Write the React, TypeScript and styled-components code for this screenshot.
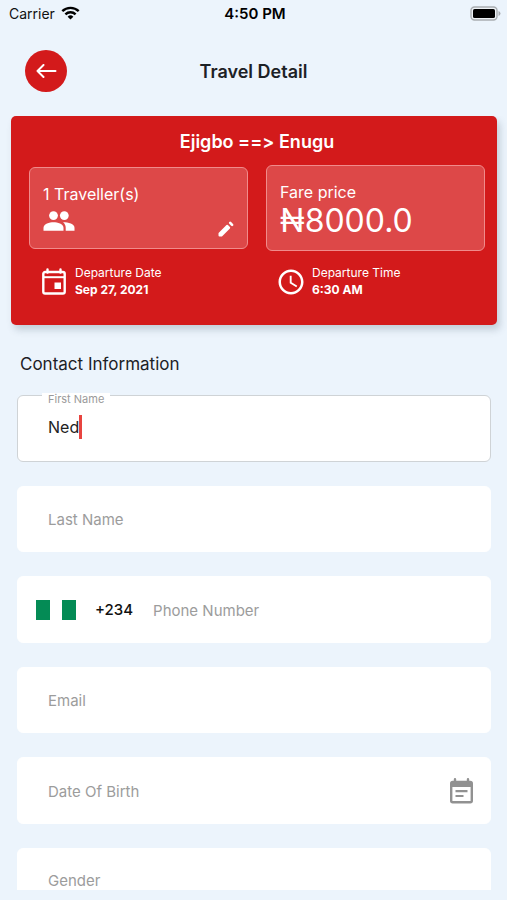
import React from 'react';
import styled, { createGlobalStyle } from 'styled-components';
import { MdAccessTime } from 'react-icons/md';

const GlobalStyle = createGlobalStyle`
  *, *::before, *::after { box-sizing: border-box; }
  body {
    margin: 0;
    background: #ecf4fc;
    color: #1c2126;
    font-family: Inter, "Liberation Sans", sans-serif;
  }
  button, input, select { font: inherit; }
`;

const Screen = styled.div`
  display: flex;
  flex-direction: column;
  height: 100vh;
  padding-bottom: 10px;
`;

const StatusBar = styled.div`
  display: grid;
  grid-template-columns: 1fr auto 1fr;
  align-items: center;
  height: 26px;
  padding: 0 6px 0 9px;
  font-size: 14px;
  color: #111;
`;

const Carrier = styled.div`
  display: flex;
  align-items: center;
  gap: 6px;
`;

const Clock = styled.time`
  font-size: 15px;
  font-weight: 600;
  color: #000;
`;

const Battery = styled.svg`
  justify-self: end;
`;

const Header = styled.header`
  display: grid;
  grid-template-columns: 1fr auto 1fr;
  align-items: center;
  height: 90px;
  padding: 0 25px;
`;

const BackButton = styled.button`
  display: grid;
  place-items: center;
  width: 42px;
  height: 42px;
  padding: 0;
  border: 0;
  border-radius: 50%;
  background: #d31a1b;
  color: #fff;
`;

const Title = styled.h1`
  margin: 0;
  font-size: 18px;
  font-weight: 600;
`;

const Content = styled.main`
  flex: 1;
  min-height: 0;
  overflow-y: auto;
  scrollbar-width: none;
`;

const TripCard = styled.section`
  margin: 0 10px 0 11px;
  padding: 14px 12px 27px 18px;
  border-radius: 5px;
  background: #d31a1b;
  color: #fff;
  box-shadow: 3px 5px 7px rgba(80, 100, 115, 0.25);
`;

const Route = styled.h2`
  margin: 0;
  font-size: 18px;
  line-height: 24px;
  font-weight: 600;
  font-variant-ligatures: none;
  font-feature-settings: "calt" 0;
  text-align: center;
`;

const Columns = styled.div<{ $top: number }>`
  display: grid;
  grid-template-columns: 1fr 1fr;
  align-items: center;
  gap: 18px;
  margin-top: ${({ $top }) => $top}px;
`;

const Panel = styled.div<{ $height: number }>`
  display: flex;
  flex-direction: column;
  justify-content: center;
  height: ${({ $height }) => $height}px;
  padding: 4px 13px 0;
  border: 1px solid #f08b8b;
  border-radius: 6px;
  background: #dd4848;
`;

const PanelLabel = styled.div`
  font-size: 16px;
  line-height: 22px;
`;

const PanelRow = styled.div`
  display: flex;
  align-items: flex-start;
  justify-content: space-between;
  padding-top: 6px;
`;

const EditButton = styled.button`
  display: flex;
  margin-top: 10px;
  padding: 0;
  border: 0;
  background: none;
  color: #fff;
`;

const Price = styled.div`
  font-size: 32px;
  line-height: 36px;
`;

const Departure = styled.div`
  display: flex;
  align-items: center;
  gap: 6px;
  padding-left: 10px;
`;

const DepartureLabel = styled.div`
  font-size: 12px;
  line-height: 16px;
`;

const DepartureValue = styled.div`
  font-size: 12px;
  line-height: 17px;
  font-weight: 700;
`;

const Form = styled.form`
  display: flex;
  flex-direction: column;
  gap: 24px;
  padding: 0 16px 0 17px;
`;

const SectionTitle = styled.h2`
  margin: 27px 20px 19px;
  font-size: 17px;
  line-height: 24px;
  font-weight: 400;
`;

const Field = styled.div<{ $height: number; $outlined?: boolean }>`
  position: relative;
  display: flex;
  flex-shrink: 0;
  align-items: center;
  height: ${({ $height }) => $height}px;
  padding: 0 17px ${({ $outlined }) => ($outlined ? 3 : 0)}px 30px;
  border: 1px solid ${({ $outlined }) => ($outlined ? '#cfd3d6' : '#fff')};
  border-radius: 6px;
  background: #fff;
`;

const PhoneField = styled(Field)`
  padding-left: 18px;
`;

const FloatingLabel = styled.label`
  position: absolute;
  top: -3px;
  left: 24px;
  padding: 0 6px;
  background: #fff;
  color: #9a9a9a;
  font-size: 11px;
  line-height: 12px;
`;

const TextInput = styled.input<{ $fit?: boolean }>`
  flex: ${({ $fit }) => ($fit ? 'none' : '1')};
  field-sizing: ${({ $fit }) => ($fit ? 'content' : 'fixed')};
  min-width: 0;
  padding: 0;
  border: 0;
  outline: 0;
  background: none;
  color: #222;
  caret-color: transparent;
  font-size: 16px;
  line-height: 24px;
  &::placeholder { color: #9c9c9c; opacity: 1; font-size: 15px; }
`;

const GenderSelect = styled.select`
  flex: 1;
  appearance: none;
  padding: 0;
  border: 0;
  background: none;
  color: #9c9c9c;
  font-size: 15px;
  line-height: 24px;
`;

const Caret = styled.span`
  width: 3px;
  height: 24px;
  background: #e8443f;
`;

const CountryButton = styled.button`
  display: flex;
  align-items: center;
  gap: 19px;
  margin-right: 20px;
  padding: 0;
  border: 0;
  background: none;
  color: #111;
  font-size: 15px;
  font-weight: 500;
`;

const Flag = styled.span`
  width: 40px;
  height: 20px;
  background: linear-gradient(90deg, #048b55 0 34%, #fff 34% 66%, #048b55 66%);
`;

const CalendarButton = styled.button`
  display: flex;
  padding: 0;
  border: 0;
  background: none;
  color: #919191;
`;

const PeopleIcon = () => (
  <svg width="32" height="20" viewBox="0 0 32 20" fill="currentColor" aria-hidden="true">
    <circle cx="10.5" cy="4.6" r="4.4" />
    <circle cx="21.3" cy="4.6" r="4.4" />
    <path d="M.5 19.8v-3c0-3.900 6-5.600 10-5.600s10 1.700 10 5.600v3z" />
    <path d="M20 11.300c5.500 0 11.500 1.500 11.500 5.500v3h-8.800v-3c0-2.300-.9-4.200-2.700-5.500z" />
  </svg>
);

const PencilIcon = () => (
  <svg width="16" height="16" viewBox="0 0 16 16" fill="currentColor" stroke="currentColor" strokeWidth="2" strokeLinejoin="round">
    <path d="M1.500 14.500v-2l7.700-7.700 2 2-7.700 7.700z" />
    <path d="M12.200 1.900 14.100 3.800" strokeWidth="2.600" strokeLinecap="round" />
  </svg>
);

const DateIcon = () => (
  <svg width="30" height="30" viewBox="-3 -1 30 30" fill="none" stroke="currentColor" aria-hidden="true">
    <rect x="1.300" y="4" width="21.400" height="21.500" rx="1.800" strokeWidth="2.400" />
    <path d="M2 9.200h20" strokeWidth="2" />
    <path d="M5.500 1.500v3M18.500 1.500v3" strokeWidth="2.400" strokeLinecap="round" />
    <path d="M12.500 14.500h6.500v6.500h-6.500z" fill="currentColor" stroke="none" />
  </svg>
);

const NoteIcon = () => (
  <svg width="23" height="26" viewBox="0 0 23 26" fill="none" stroke="currentColor">
    <rect x="1.200" y="4" width="20.600" height="20.300" rx="1.500" strokeWidth="2.400" />
    <path d="M1.500 4h20v5h-20z" fill="currentColor" stroke="none" />
    <path d="M5 1.200v3M18 1.200v3" strokeWidth="2.400" strokeLinecap="round" />
    <path d="M5.500 13.200h12M5.500 18h8" strokeWidth="2.200" />
  </svg>
);

export default function App() {
  return (
    <Screen>
      <GlobalStyle />
      <StatusBar>
        <Carrier>
          <span>Carrier</span>
          <svg width="19" height="14" viewBox="0 0 19 14" aria-hidden="true">
            <g fill="none" stroke="#000" strokeWidth="2.400">
              <path d="M1.300 5.200a11.700 11.700 0 0 1 16.400 0" />
              <path d="M4.400 8.400a7.300 7.300 0 0 1 10.200 0" />
            </g>
            <path d="M9.500 13.600 6.600 10.700a4.200 4.200 0 0 1 5.800 0z" fill="#000" />
          </svg>
        </Carrier>
        <Clock>4:50 PM</Clock>
        <Battery width="31" height="15" viewBox="0 0 31 15" aria-hidden="true">
          <rect x="1" y="1" width="26" height="13" rx="3.500" fill="#eef2f6" stroke="#a9adb1" strokeWidth="1.400" />
          <rect x="3" y="3" width="22" height="9" rx="1.600" fill="#000" />
          <path d="M28.500 5v5q2-.7 2-2.500t-2-2.500z" fill="#a9adb1" />
        </Battery>
      </StatusBar>
      <Header>
        <BackButton type="button" aria-label="Back">
          <svg width="21" height="14" viewBox="0 0 21 14" fill="none" stroke="currentColor" strokeWidth="2" strokeLinecap="round" strokeLinejoin="round">
            <path d="M19.500 7H1.500M7.500 1 1.500 7l6 6" />
          </svg>
        </BackButton>
        <Title>Travel Detail</Title>
      </Header>
      <Content>
        <TripCard>
          <Route>Ejigbo ==&gt; Enugu</Route>
          <Columns $top={11}>
            <Panel $height={82}>
              <PanelLabel>1 Traveller(s)</PanelLabel>
              <PanelRow>
                <PeopleIcon />
                <EditButton type="button" aria-label="Edit travellers">
                  <PencilIcon />
                </EditButton>
              </PanelRow>
            </Panel>
            <Panel $height={86}>
              <PanelLabel>Fare price</PanelLabel>
              <Price>₦8000.0</Price>
            </Panel>
          </Columns>
          <Columns $top={14}>
            <Departure>
              <DateIcon />
              <div>
                <DepartureLabel>Departure Date</DepartureLabel>
                <DepartureValue>Sep 27, 2021</DepartureValue>
              </div>
            </Departure>
            <Departure>
              <MdAccessTime size={30} aria-hidden="true" />
              <div>
                <DepartureLabel>Departure Time</DepartureLabel>
                <DepartureValue>6:30 AM</DepartureValue>
              </div>
            </Departure>
          </Columns>
        </TripCard>
        <SectionTitle>Contact Information</SectionTitle>
        <Form>
          <Field $height={67} $outlined>
            <FloatingLabel htmlFor="first-name">First Name</FloatingLabel>
            <TextInput id="first-name" $fit defaultValue="Ned" />
            <Caret />
          </Field>
          <Field $height={66}>
            <TextInput aria-label="Last Name" placeholder="Last Name" />
          </Field>
          <PhoneField $height={67}>
            <CountryButton type="button" aria-label="Country code +234">
              <Flag />
              <span>+234</span>
            </CountryButton>
            <TextInput type="tel" aria-label="Phone Number" placeholder="Phone Number" />
          </PhoneField>
          <Field $height={66}>
            <TextInput type="email" aria-label="Email" placeholder="Email" />
          </Field>
          <Field $height={67}>
            <TextInput aria-label="Date Of Birth" placeholder="Date Of Birth" />
            <CalendarButton type="button" aria-label="Choose date">
              <NoteIcon />
            </CalendarButton>
          </Field>
          <Field $height={66}>
            <GenderSelect aria-label="Gender" defaultValue="">
              <option value="">Gender</option>
              <option>Female</option>
              <option>Male</option>
            </GenderSelect>
          </Field>
        </Form>
      </Content>
    </Screen>
  );
}
